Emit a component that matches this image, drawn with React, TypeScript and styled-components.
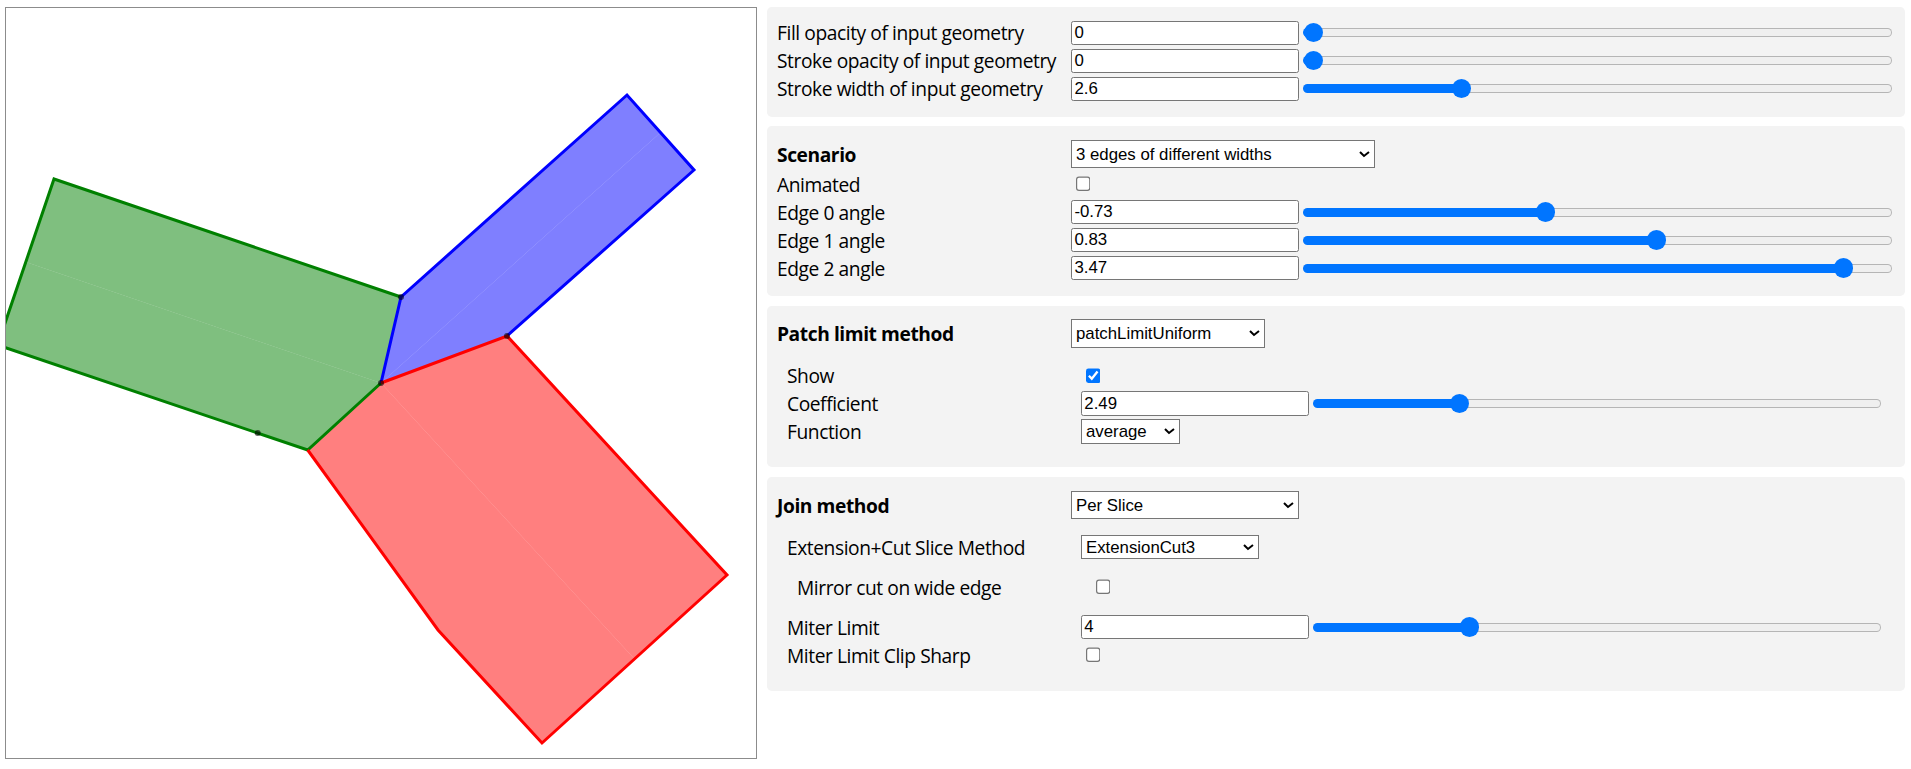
import React from 'react'
import styled, { createGlobalStyle } from 'styled-components'

const GlobalStyle = createGlobalStyle`
	html, body {
		margin: 0;
		padding: 0;
		background: #fff;
	}

	body {
		font-family: "Open Sans", "Noto Sans", sans-serif;
		color: #000;
	}
`

const Page = styled.div`
	display: flex;
	align-items: flex-start;
	gap: 10px;
	padding: 7px 0 0 5px;
`

const Canvas = styled.div`
	flex: none;
	width: 752px;
	height: 752px;
	box-sizing: border-box;
	border: 1px solid #8c8c8c;
	background: #fff;

	svg {
		display: block;
	}
`

// the control column is laid out at 120% like the original page
const Controls = styled.div`
	flex: none;
	zoom: 1.2;
	width: 948.33px;
	display: flex;
	flex-direction: column;
	gap: 8.33px;
	font-size: 16px;
`

const Panel = styled.section`
	background: #f3f3f3;
	border-radius: 4px;
	padding: 11.25px 10.83px 12.92px 8.33px;
	display: flex;
	flex-direction: column;
	gap: 2.92px;
`

const Group = styled.div`
	display: flex;
	flex-direction: column;
	gap: 2.92px;
	margin: 10px 0;
	padding: 0 9.17px 0 8.33px;

	&:last-child {
		margin-bottom: 6.67px;
	}
`

const Row = styled.div<{ $tall?: boolean }>`
	display: flex;
	align-items: center;
	height: ${p => (p.$tall ? 23.75 : 20.42)}px;
`

const Label = styled.label<{ $bold?: boolean }>`
	flex: none;
	width: 245px;
	font-weight: ${p => (p.$bold ? 700 : 400)};
	letter-spacing: -0.35px;
	line-height: 1;
	white-space: nowrap;
`

const TextInput = styled.input`
	flex: none;
	box-sizing: border-box;
	width: 190px;
	height: 20.42px;
	margin: 0;
	padding: 1px 2px;
	border: 1px solid #767676;
	border-radius: 2px;
	background: #fff;
	color: #000;
	font: 14px "Liberation Sans", Arial, sans-serif;
`

const Slider = styled.input`
	-webkit-appearance: none;
	appearance: none;
	flex: 1;
	min-width: 0;
	height: 16px;
	margin: 0 0 0 3.33px;
	background: transparent;

	&::-webkit-slider-runnable-track {
		box-sizing: border-box;
		height: 7.5px;
		border: 1px solid transparent;
		border-radius: 4px;
		background:
			linear-gradient(to right, #0075ff calc(8px + (100% - 16px) * var(--pos)), transparent 0) border-box,
			linear-gradient(#efefef, #efefef) padding-box,
			linear-gradient(#b5b5b5, #b5b5b5) border-box;
	}

	&::-webkit-slider-thumb {
		-webkit-appearance: none;
		appearance: none;
		width: 16px;
		height: 16px;
		margin-top: -5.25px;
		border: none;
		border-radius: 50%;
		background: #0075ff;
	}
`

const Check = styled.input`
	flex: none;
	margin: 3px 3px 3px 4px;
`

const Select = styled.select<{ $w: number; $tall?: boolean }>`
	flex: none;
	box-sizing: border-box;
	width: ${p => p.$w}px;
	height: ${p => (p.$tall ? 23.75 : 20.42)}px;
	margin: 0;
	color: #000;
	background: #fff;
	font: 14px "Liberation Sans", Arial, sans-serif;
`

type Pt = [number, number]

const C: Pt = [381, 383]
const B1: Pt = [401, 297]
const B2: Pt = [627, 95]
const B3: Pt = [694, 170]
const B4: Pt = [507, 336]
const G1: Pt = [54, 179]
const G2: Pt = [-2.4, 345]
const G3: Pt = [307.7, 450]
const R2: Pt = [727, 575]
const R3: Pt = [542, 743]
const R4: Pt = [438, 630]

const mid = (a: Pt, b: Pt): Pt => [(a[0] + b[0]) / 2, (a[1] + b[1]) / 2]
const pts = (list: Pt[]) => list.map(p => p.join(',')).join(' ')

const edges: { color: string; slices: Pt[][]; outline: Pt[] }[] = [
	{ color: 'green', slices: [[C, B1, G1, mid(G1, G2)], [C, mid(G1, G2), G2, G3]], outline: [B1, G1, G2, G3, C] },
	{ color: 'blue', slices: [[C, B1, B2, mid(B2, B3)], [C, mid(B2, B3), B3, B4]], outline: [C, B1, B2, B3, B4] },
	{ color: 'red', slices: [[C, B4, R2, mid(R2, R3)], [C, mid(R2, R3), R3, R4, G3]], outline: [C, B4, R2, R3, R4, G3] },
]

const dots: Pt[] = [C, B1, B4, [257.7, 433]]

const Drawing = () => (
	<svg width="750" height="750" viewBox="6 8 750 750">
		{edges.map(e =>
			e.slices.map((s, i) => <polygon key={e.color + i} points={pts(s)} fill={e.color} fillOpacity={0.5} />)
		)}
		{edges.map(e => (
			<polyline key={e.color} points={pts(e.outline)} fill="none" stroke={e.color} strokeWidth={3} strokeLinejoin="miter" />
		))}
		{dots.map((d, i) => <circle key={i} cx={d[0]} cy={d[1]} r={3} fill="rgba(0,0,0,0.6)" />)}
	</svg>
)

interface SliderRowProps {
	label: string;
	value: number;
	min: number;
	max: number;
	step?: number;
}

const SliderRow = ({ label, value, min, max, step = 0.01 }: SliderRowProps) => (
	<Row>
		<Label>{label}</Label>
		<TextInput type="text" defaultValue={String(value)} />
		<Slider
			type="range"
			min={min}
			max={max}
			step={step}
			defaultValue={value}
			style={{ '--pos': (value - min) / (max - min) } as React.CSSProperties}
		/>
	</Row>
)

const CheckRow = ({ label, checked }: { label: string; checked?: boolean }) => (
	<Row>
		<Label>{label}</Label>
		<Check type="checkbox" defaultChecked={checked} />
	</Row>
)

const App = () => (
	<>
		<GlobalStyle />
		<Page>
			<Canvas>
				<Drawing />
			</Canvas>
			<Controls>
				<Panel>
					<SliderRow label="Fill opacity of input geometry" value={0} min={0} max={1} />
					<SliderRow label="Stroke opacity of input geometry" value={0} min={0} max={1} />
					<SliderRow label="Stroke width of input geometry" value={2.6} min={0} max={10} />
				</Panel>

				<Panel>
					<Row $tall>
						<Label $bold>Scenario</Label>
						<Select $w={253.3} $tall defaultValue="3 edges of different widths">
							<option>2 edges</option>
							<option>3 edges</option>
							<option>3 edges of different widths</option>
							<option>4 edges</option>
						</Select>
					</Row>
					<CheckRow label="Animated" />
					<SliderRow label="Edge 0 angle" value={-0.73} min={-4} max={4} />
					<SliderRow label="Edge 1 angle" value={0.83} min={-4} max={4} />
					<SliderRow label="Edge 2 angle" value={3.47} min={-4} max={4} />
				</Panel>

				<Panel>
					<Row $tall>
						<Label $bold>Patch limit method</Label>
						<Select $w={161.7} $tall defaultValue="patchLimitUniform">
							<option>patchLimitNone</option>
							<option>patchLimitUniform</option>
						</Select>
					</Row>
					<Group>
						<CheckRow label="Show" checked />
						<SliderRow label="Coefficient" value={2.49} min={0} max={10} />
						<Row>
							<Label>Function</Label>
							<Select $w={82.5} defaultValue="average">
								<option>min</option>
								<option>average</option>
								<option>max</option>
							</Select>
						</Row>
					</Group>
				</Panel>

				<Panel>
					<Row $tall>
						<Label $bold>Join method</Label>
						<Select $w={190} $tall defaultValue="Per Slice">
							<option>Per Slice</option>
							<option>Per Edge</option>
						</Select>
					</Row>
					<Group>
						<Row>
							<Label>Extension+Cut Slice Method</Label>
							<Select $w={148.3} defaultValue="ExtensionCut3">
								<option>ExtensionCut1</option>
								<option>ExtensionCut2</option>
								<option>ExtensionCut3</option>
							</Select>
						</Row>
						<Group>
							<CheckRow label="Mirror cut on wide edge" />
						</Group>
						<SliderRow label="Miter Limit" value={4} min={0} max={15} step={0.1} />
						<CheckRow label="Miter Limit Clip Sharp" />
					</Group>
				</Panel>
			</Controls>
		</Page>
	</>
)

export default App
